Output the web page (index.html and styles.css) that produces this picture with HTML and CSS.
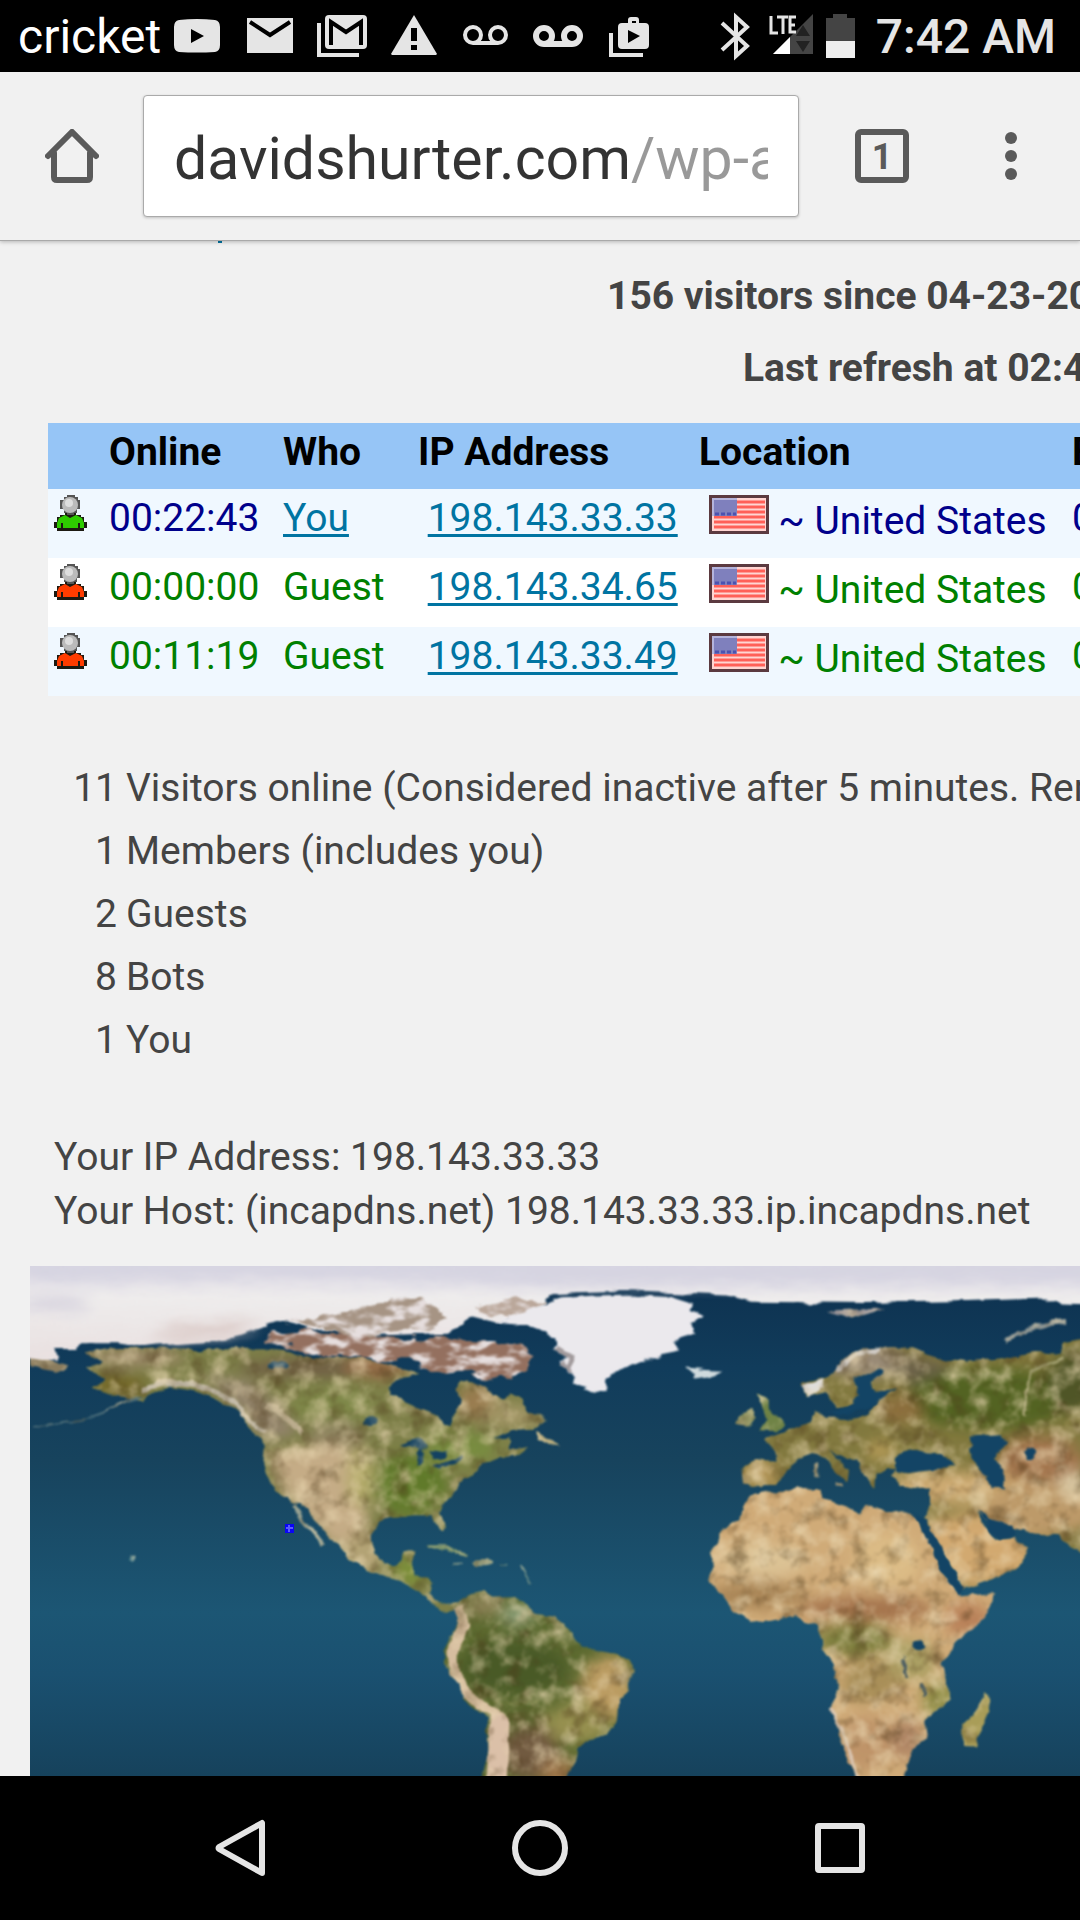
FILE: index.html
```
<!DOCTYPE html>
<html lang="en">
<head>
  <meta charset="UTF-8">
  <meta name="viewport" content="width=device-width, initial-scale=1.0">
  <title>Who's Been Online</title>
  <link rel="stylesheet" href="styles.css">
</head>
<body>
  <!-- Shared icons -->
  <svg class="sprite" aria-hidden="true">
    <symbol id="person" viewBox="0 0 33 36">
      <path d="M3 22h3v-2h5v-2h11v2h5v2h3v5h3v6h-3v3H3v-3H0v-6h3z" fill="#1c1a12"/>
      <path d="M5 23l6-3 5 3 6-3 6 3 2 5v5h-4v-5h-2v5H9v-5H7v5H3v-5z" fill="currentColor"/>
      <path d="M10 2h3V0h8v2h3v3h2v9h-3v4h-3v2h-7v-2h-3v-4H6V5h4z" fill="#555"/>
      <circle cx="16" cy="10" r="8" fill="#bbb"/>
      <circle cx="15" cy="8" r="4" fill="#dedede"/>
    </symbol>
    <symbol id="flag" viewBox="0 0 60 39">
      <path fill="#5b3a40" d="M0 0h60v39H0z"/>
      <path fill="#ffd5d2" d="M3 3h54v33H3z"/>
      <path d="M5 7h51M5 12h51M5 17h51M5 22h51M5 27h51M5 32h51" stroke="#ff6058" stroke-width="3"/>
      <path fill="#7f80bd" d="M3 3h25v18H3z"/>
      <path d="M6 19h21" stroke="#4c52b0" stroke-width="3" stroke-dasharray="4 2"/>
      <path d="M3 4h25M4 3v18" stroke="#b4b4dc" stroke-width="2"/>
    </symbol>
  </svg>

  <header class="status-bar">
    <span class="carrier">cricket</span>
    <svg viewBox="0 0 72 72"><path fill="#e5e5e5" d="M18 20q18-2 36 0 5 1 5 7v18q0 6-5 7-18 1-36 0-5-1-5-7V27q0-6 5-7zm12 9v14l13-7z"/></svg>
    <svg viewBox="0 0 72 72"><path fill="#e5e5e5" d="M14 18h46v35H14z"/><path d="M17 22l20 13 20-13" fill="none" stroke="#000" stroke-width="4"/></svg>
    <svg viewBox="0 0 72 72"><rect x="20" y="15" width="42" height="34" rx="4" fill="#e5e5e5"/><path d="M26 45V22l15 10 15-10v23" fill="none" stroke="#000" stroke-width="4"/><path d="M14 23v32h40" fill="none" stroke="#e5e5e5" stroke-width="4"/></svg>
    <svg viewBox="0 0 72 72"><path fill="#e5e5e5" d="M37 15l23 39-1 1H15l-1-1z"/><path d="M37 28v13M37 45v5" stroke="#000" stroke-width="6"/></svg>
    <svg viewBox="0 0 72 72"><path fill="none" stroke="#e5e5e5" stroke-width="4" d="M24 43h25M24 27a8 8 0 1 0 0 16a8 8 0 1 0 0-16M49 27a8 8 0 1 0 0 16a8 8 0 1 0 0-16"/></svg>
    <svg viewBox="0 0 72 72"><path fill="none" stroke="#e5e5e5" stroke-width="6" d="M23 44h28M23 28a8 8 0 1 0 0 16a8 8 0 1 0 0-16M51 28a8 8 0 1 0 0 16a8 8 0 1 0 0-16"/></svg>
    <svg viewBox="0 0 72 72"><path fill="#e5e5e5" fill-rule="evenodd" d="M29 23h6v-3q0-3 3-3h5q3 0 3 3v3h6q4 0 4 4v18q0 4-4 4H29q-4 0-4-4V27q0-4 4-4zm10 0h4v-2h-4zm-4 7v13l12-7z"/><path d="M18 33v22h32" fill="none" stroke="#e5e5e5" stroke-width="4"/></svg>

    <div class="status-right">
      <svg class="narrow" viewBox="0 0 48 72"><path d="M10 23l25 23-11 10V17l11 10L10 50" fill="none" stroke="#e5e5e5" stroke-width="4"/></svg>
      <svg class="signal" viewBox="0 0 60 72">
        <path d="M53 14v40H13z" fill="#444"/><path d="M30 37v17H13z" fill="#fff"/>
        <path d="M43 25l7 11H36zM43 52l7-11H36z" fill="#222"/>
        <path d="M11 16v17h7M17 17h11M23 17v17M36 17h-6v15h6M30 25h5" fill="none" stroke="#e5e5e5" stroke-width="3"/>
      </svg>
      <svg class="narrow" viewBox="0 0 48 72"><path d="M6 18h7v-4h14v4h8v23H6z" fill="#444"/><path d="M6 41h29v17H6z" fill="#eee"/></svg>
      <span class="clock">7:42 AM</span>
    </div>
  </header>

  <div class="toolbar">
    <button class="home" type="button" aria-label="Home">
      <svg viewBox="0 0 54 54"><path d="M3 27L27 3l24 24M9 24v24q0 3 3 3h30q3 0 3-3V24" fill="none" stroke="#5a5a5a" stroke-width="6" stroke-linecap="round"/></svg>
    </button>
    <div class="omnibox">
      <input type="text" value="davidshurter.com/wp-admin" aria-label="Address" spellcheck="false">
    </div>
    <button class="tabs" type="button" aria-label="Tabs"><span class="tab-count">1</span></button>
    <button class="more" type="button" aria-label="Menu">
      <svg viewBox="0 0 12 54"><circle cx="6" cy="9" r="6"/><circle cx="6" cy="27" r="6"/><circle cx="6" cy="45" r="6"/></svg>
    </button>
  </div>

  <main class="page">
    <div class="above-fold"></div>
    <p class="summary visitors">156 visitors since 04-23-2016</p>
    <p class="summary refresh">Last refresh at 02:42</p>

    <table class="online">
      <colgroup>
        <col class="col-icon"><col class="col-online"><col class="col-who"><col class="col-ip"><col class="col-location"><col>
      </colgroup>
      <thead>
        <tr><th></th><th>Online</th><th>Who</th><th>IP Address</th><th>Location</th><th>Entry</th></tr>
      </thead>
      <tbody>
        <tr class="me">
          <td><svg class="person active"><use href="#person"/></svg></td>
          <td>00:22:43</td>
          <td><a href="#you">You</a></td>
          <td>&nbsp;<a href="#ip1">198.143.33.33</a></td>
          <td>&nbsp;<svg class="flag"><use href="#flag"/></svg>&nbsp;~ United States</td>
          <td>02:19</td>
        </tr>
        <tr>
          <td><svg class="person"><use href="#person"/></svg></td>
          <td>00:00:00</td>
          <td>Guest</td>
          <td>&nbsp;<a href="#ip2">198.143.34.65</a></td>
          <td>&nbsp;<svg class="flag"><use href="#flag"/></svg>&nbsp;~ United States</td>
          <td>02:36</td>
        </tr>
        <tr>
          <td><svg class="person"><use href="#person"/></svg></td>
          <td>00:11:19</td>
          <td>Guest</td>
          <td>&nbsp;<a href="#ip3">198.143.33.49</a></td>
          <td>&nbsp;<svg class="flag"><use href="#flag"/></svg>&nbsp;~ United States</td>
          <td>02:24</td>
        </tr>
      </tbody>
    </table>

    <ul class="counts">
      <li><span class="num">11</span>Visitors online (Considered inactive after 5 minutes. Removed</li>
      <li><span class="num">1</span>Members (includes you)</li>
      <li><span class="num">2</span>Guests</li>
      <li><span class="num">8</span>Bots</li>
      <li><span class="num">1</span>You</li>
    </ul>

    <p class="host">
      Your IP Address: 198.143.33.33<br>
      Your Host: (incapdns.net) 198.143.33.33.ip.incapdns.net
    </p>

    <div class="map">
      <svg viewBox="0 0 1050 510" preserveAspectRatio="xMinYMin slice" role="img" aria-label="Visitor map">
        <defs>
          <linearGradient id="ocean" x1="0" y1="0" x2="0" y2="1">
            <stop offset="0" stop-color="#0d304e"/>
            <stop offset=".2" stop-color="#113c5b"/>
            <stop offset=".38" stop-color="#17435d"/>
            <stop offset=".68" stop-color="#1c5674"/>
            <stop offset=".8" stop-color="#1a5070"/>
            <stop offset="1" stop-color="#16425c"/>
          </linearGradient>
          <linearGradient id="ice" x1="0" y1="0" x2="0" y2="1">
            <stop offset="0" stop-color="#d5d3e2"/>
            <stop offset=".2" stop-color="#dcd9e5"/>
            <stop offset=".5" stop-color="#eeecec"/>
            <stop offset="1" stop-color="#e9e0e0"/>
          </linearGradient>
          <filter id="terrain" x="-30" y="-30" width="1110" height="570" filterUnits="userSpaceOnUse" color-interpolation-filters="sRGB">
            <feTurbulence type="fractalNoise" baseFrequency=".05" numOctaves="4" seed="4" result="noise"/>
            <feDisplacementMap in="SourceGraphic" in2="noise" scale="9" xChannelSelector="R" yChannelSelector="G" result="shape"/>
            <feColorMatrix in="noise" values="0 0 0 0 .3  0 0 0 0 .22  0 0 0 0 .1  1.4 0 0 0 -.7" result="dark"/>
            <feColorMatrix in="noise" values="0 0 0 0 .92  0 0 0 0 .85  0 0 0 0 .7  0 1.6 0 0 -.72" result="light"/>
            <feComposite in="dark" in2="shape" operator="in" result="darkLand"/>
            <feComposite in="light" in2="shape" operator="in" result="lightLand"/>
            <feMerge result="all"><feMergeNode in="shape"/><feMergeNode in="darkLand"/><feMergeNode in="lightLand"/></feMerge>
            <feGaussianBlur in="all" stdDeviation="1.2"/>
          </filter>
          <filter id="arctic" x="-30" y="-30" width="1110" height="570" filterUnits="userSpaceOnUse" color-interpolation-filters="sRGB">
            <feTurbulence type="fractalNoise" baseFrequency=".03 .1" numOctaves="3" seed="9" result="noise"/>
            <feDisplacementMap in="SourceGraphic" in2="noise" scale="10" xChannelSelector="R" yChannelSelector="G" result="shape"/>
            <feGaussianBlur in="shape" stdDeviation="1.2"/>
          </filter>
          <filter id="islands" x="-30" y="-30" width="1110" height="570" filterUnits="userSpaceOnUse" color-interpolation-filters="sRGB">
            <feTurbulence type="fractalNoise" baseFrequency=".05 .1" numOctaves="3" seed="2" result="noise"/>
            <feDisplacementMap in="SourceGraphic" in2="noise" scale="16" xChannelSelector="R" yChannelSelector="G" result="shape"/>
            <feColorMatrix in="noise" values="0 0 0 0 .9  0 0 0 0 .87  0 0 0 0 .87  4 0 0 0 -1.75" result="snow"/>
            <feComposite in="snow" in2="shape" operator="in" result="snowLand"/>
            <feMerge result="all"><feMergeNode in="shape"/><feMergeNode in="snowLand"/></feMerge>
            <feGaussianBlur in="all" stdDeviation="1.2"/>
          </filter>
          <filter id="soft" x="-30%" y="-30%" width="160%" height="160%"><feGaussianBlur stdDeviation="20"/></filter>
          <path id="namerica" d="M262 300L330 285 480 283 600 288 700 288 780 285 850 290 900 305 960 315 1080 312 1160 330 1220 350 1262 362 1210 370 1165 400 1165 425 1210 440 1260 460 1312 480 1328 512 1355 510 1358 480 1382 450 1370 400 1378 380 1420 385 1460 400 1475 425 1510 432 1530 410 1560 430 1582 465 1625 480 1640 500 1600 522 1530 525 1480 548 1525 545 1530 582 1585 572 1545 602 1500 598 1460 615 1430 640 1395 662 1370 700 1330 738 1320 765 1335 805 1322 825 1308 800 1298 770 1240 770 1180 775 1140 790 1118 830 1122 880 1150 912 1188 915 1212 878 1250 878 1238 920 1240 945 1285 945 1295 965 1288 1000 1310 1020 1350 1030 1375 1030 1375 1046 1325 1044 1290 1025 1260 990 1200 967 1150 947 1100 932 1045 902 1020 870 990 840 950 790 920 745 880 735 840 710 800 660 790 620 795 570 780 545 740 510 700 460 650 430 590 408 510 395 450 415 425 440 380 430 340 420 275 400 320 372 255 345 310 325z"/>
          <path id="samerica" d="M345 1035L390 1000 430 990 460 1010 520 1008 560 1030 590 1060 650 1068 680 1100 700 1135 760 1160 830 1170 870 1192 888 1225 860 1272 835 1310 830 1370 800 1410 740 1425 710 1450 705 1490 670 1540 425 1540 445 1450 440 1360 385 1320 350 1260 308 1195 310 1160 350 1100 360 1070z"/>
          <path id="africa" d="M215 712L300 700 380 693 425 690 430 720 490 740 540 768 560 740 610 755 660 765 705 765 720 800 760 860 790 930 840 1003 942 993 935 1030 880 1100 830 1140 788 1200 800 1250 805 1310 735 1370 745 1420 700 1450 665 1540 530 1540 490 1450 480 1390 448 1335 480 1280 470 1220 425 1160 420 1088 370 1080 350 1058 210 1080 160 1050 130 1005 90 965 100 920 90 880 130 810 180 780 190 740z"/>
          <path id="eurasia" d="M190 625L245 610 290 615 285 580 250 548 330 520 390 500 405 470 430 490 500 490 560 480 600 440 500 455 470 460 440 415 380 430 368 385 435 368 500 310 560 285 680 280 740 300 810 320 850 325 960 315 1080 293 1140 300 1150 265 1240 250 1240 900 1170 862 1140 825 1060 820 1010 812 960 800 925 780 900 760 905 795 940 845 1000 830 1048 865 1010 920 940 955 850 985 800 900 770 850 725 785 750 740 750 692 700 693 660 685 635 655 650 635 620 630 590 650 585 690 555 660 540 620 490 600 450 578 510 640 505 668 478 650 430 602 400 595 350 610 325 640 290 672 245 692 195 680z"/>
          <clipPath id="clipN"><use href="#namerica"/></clipPath>
          <clipPath id="clipS"><use href="#samerica"/></clipPath>
          <clipPath id="clipAf"><use href="#africa"/></clipPath>
          <clipPath id="clipEu"><use href="#eurasia"/></clipPath>
        </defs>

        <rect width="1050" height="510" fill="url(#ocean)"/>

        <!-- North America -->
        <g filter="url(#terrain)">
          <g transform="translate(-30 -16) scale(.3333 .3444)">
            <use href="#namerica" fill="#7d7f48"/>
            <g clip-path="url(#clipN)">
              <g filter="url(#soft)">
                <ellipse cx="400" cy="310" rx="150" ry="22" fill="#a18a6e"/>
                <ellipse cx="350" cy="390" rx="90" ry="35" fill="#75692c"/>
                <ellipse cx="950" cy="340" rx="240" ry="30" fill="#716044"/>
                <ellipse cx="1130" cy="340" rx="100" ry="26" fill="#9a6a48"/>
                <path d="M600 360L760 380 900 520 800 560 700 450z" fill="#92836a"/>
                <ellipse cx="1000" cy="450" rx="130" ry="55" fill="#7f8848"/>
                <ellipse cx="1010" cy="540" rx="90" ry="45" fill="#8f8460"/>
                <path d="M800 590L1000 560 1110 620 1100 780 1120 900 1020 880 860 720z" fill="#c5ac86"/>
                <ellipse cx="1080" cy="660" rx="40" ry="90" fill="#b5ac6c"/>
                <ellipse cx="1230" cy="680" rx="110" ry="90" fill="#617a2c"/>
                <ellipse cx="1430" cy="440" rx="60" ry="50" fill="#9a7c50"/>
                <ellipse cx="1530" cy="480" rx="90" ry="35" fill="#a39666"/>
                <ellipse cx="1380" cy="570" rx="110" ry="45" fill="#788c40"/>
                <ellipse cx="1090" cy="880" rx="60" ry="70" fill="#b3a374"/>
                <ellipse cx="1230" cy="930" rx="50" ry="40" fill="#7b9038"/>
              </g>
            </g>
            <path d="M90 300L150 322 205 335 190 355 140 345 90 335z" fill="#8a7c5e"/>
            <path d="M430 425L350 455 250 490 100 515" fill="none" stroke="#3f6474" stroke-width="6"/>
            <path d="M430 405Q520 370 620 400T720 480L800 530" fill="none" stroke="#c3bba9" stroke-width="14"/>
            <path d="M800 450L850 480 910 530" fill="none" stroke="#b9ab8c" stroke-width="16"/>
            <path d="M885 742L920 800 970 858" fill="none" stroke="#9aa392" stroke-width="12"/>
            <path d="M1610 530L1680 568 1610 558z" fill="#b3a879"/>
            <path d="M1285 862L1340 862 1380 885 1405 890" fill="none" stroke="#84986c" stroke-width="9"/>
            <ellipse cx="1450" cy="906" rx="30" ry="9" fill="#98a384"/>
            <path d="M1360 914h25M1500 914h22M1560 920l30 50" stroke="#547d7e" stroke-width="6"/>
            <ellipse cx="397" cy="898" rx="9" ry="8" fill="#5f8b90"/>
            <!-- lakes -->
            <g fill="#144261">
              <path d="M1200 562L1250 545 1285 570 1262 580 1260 625 1245 625 1250 575z"/>
              <path d="M1285 578L1340 585 1335 602 1300 605zM1300 625L1385 602 1385 612 1315 635z"/>
              <ellipse cx="1112" cy="497" rx="18" ry="14"/>
              <ellipse cx="835" cy="336" rx="32" ry="11"/>
            </g>
          </g>
        </g>

        <!-- Polar ice and Canadian archipelago -->
        <g filter="url(#arctic)">
          <g transform="translate(-30 -16) scale(.3333 .3444)">
            <path d="M0 -40H3400V165L3185 158 3165 140 2900 148 2600 154 2260 150 2180 132 1900 120 1660 128 1620 165 1500 215 1420 195 1350 240 1100 250 960 230 860 205 790 222 700 252 620 264 480 274 430 280 350 268 240 268 235 290 165 290 178 322 0 302z" fill="url(#ice)"/>
            <g filter="url(#soft)">
              <path d="M0 20H3400V95L1700 105 1200 90 800 80 400 85 90 90z" fill="#d6d4e1"/>
              <ellipse cx="160" cy="155" rx="110" ry="20" fill="#d6d2de"/>
              <path d="M450 245Q620 200 780 210L700 245 500 262z" fill="#d9c8c4"/>
            </g>
          </g>
        </g>
        <g filter="url(#islands)">
          <g transform="translate(-30 -16) scale(.3333 .3444)">
            <path d="M790 250L900 235 1060 240 1210 255 1320 252 1420 268 1500 268 1570 272 1598 310 1580 345 1525 378 1460 370 1370 345 1290 352 1230 320 1130 320 1030 312 950 305 870 280 790 265z" fill="#94705f"/>
            <path d="M860 215L1060 175 1180 145 1290 150 1340 200 1290 235 1180 230 1080 260 960 220z" fill="#a69484"/>
            <path d="M1420 165L1560 140 1640 150 1540 200 1470 195z" fill="#baa79a"/>
          </g>
        </g>

        <!-- Greenland, Iceland -->
        <g filter="url(#arctic)">
          <g transform="translate(310 -16) scale(.3333 .3444)">
            <path d="M470 212L600 160 640 145 760 135 900 132 1000 137 1060 155 1045 172 1088 190 1050 215 1070 240 1000 262 1020 295 940 310 880 332 820 352 800 375 795 408 760 405 710 387 680 350 655 320 690 308 640 285 650 265 610 238 560 218z" fill="#ebe9ed"/>
            <path d="M650 285L692 310 690 350 660 325" fill="none" stroke="#a19a9c" stroke-width="16"/>
            <path d="M1030 338L1080 342 1148 345 1130 362 1070 370z" fill="#cfdadd"/>
          </g>
        </g>

        <!-- South America -->
        <g filter="url(#terrain)">
          <g transform="translate(310 -16) scale(.3333 .3444)">
            <use href="#samerica" fill="#5c6a30"/>
            <g clip-path="url(#clipS)">
              <g filter="url(#soft)">
                <ellipse cx="430" cy="1030" rx="60" ry="30" fill="#8f8358"/>
                <ellipse cx="530" cy="1060" rx="50" ry="30" fill="#8fa27c"/>
                <ellipse cx="520" cy="1210" rx="160" ry="80" fill="#4a5a26"/>
                <ellipse cx="800" cy="1270" rx="80" ry="100" fill="#bb9c62"/>
                <ellipse cx="710" cy="1370" rx="100" ry="60" fill="#96904f"/>
                <ellipse cx="570" cy="1460" rx="90" ry="80" fill="#715a40"/>
                <ellipse cx="660" cy="1520" rx="60" ry="40" fill="#a3794e"/>
              </g>
              <path d="M360 1040L375 1090 330 1170 365 1270 430 1330 490 1360 480 1450 460 1540" fill="none" stroke="#d6bd9f" stroke-width="30"/>
              <path d="M480 1350L470 1540" stroke="#dbc0a8" stroke-width="60"/>
            </g>
          </g>
        </g>

        <!-- Africa, Europe, Asia -->
        <g filter="url(#terrain)">
          <g transform="translate(650 -16) scale(.3333 .3444)">
            <use href="#africa" fill="#d0ab78"/>
            <g clip-path="url(#clipAf)">
              <g filter="url(#soft)">
                <ellipse cx="250" cy="900" rx="130" ry="50" fill="#dcc294"/>
                <ellipse cx="620" cy="900" rx="100" ry="80" fill="#dcbc86"/>
                <ellipse cx="230" cy="1000" rx="150" ry="40" fill="#a98556"/>
                <ellipse cx="560" cy="1040" rx="200" ry="40" fill="#a5744e"/>
                <ellipse cx="520" cy="1130" rx="120" ry="50" fill="#7d7f3e"/>
                <ellipse cx="690" cy="1190" rx="80" ry="60" fill="#aba064"/>
                <ellipse cx="860" cy="1070" rx="70" ry="50" fill="#b9825a"/>
                <ellipse cx="570" cy="1250" rx="90" ry="60" fill="#a98f58"/>
                <ellipse cx="780" cy="1310" rx="60" ry="60" fill="#939048"/>
                <ellipse cx="560" cy="1430" rx="90" ry="80" fill="#bf9469"/>
                <ellipse cx="680" cy="1420" rx="50" ry="60" fill="#b18766"/>
              </g>
            </g>
            <use href="#eurasia" fill="#82793f"/>
            <g clip-path="url(#clipEu)">
              <g filter="url(#soft)">
                <ellipse cx="560" cy="320" rx="130" ry="50" fill="#998a76"/>
                <ellipse cx="720" cy="350" rx="90" ry="40" fill="#6b6146"/>
                <ellipse cx="930" cy="430" rx="250" ry="90" fill="#526424"/>
                <ellipse cx="1180" cy="380" rx="80" ry="90" fill="#4f5527"/>
                <ellipse cx="660" cy="460" rx="70" ry="40" fill="#8c6e3c"/>
                <ellipse cx="240" cy="650" rx="60" ry="40" fill="#b39558"/>
                <ellipse cx="600" cy="580" rx="40" ry="30" fill="#b59b59"/>
                <ellipse cx="1080" cy="620" rx="130" ry="80" fill="#a3754e"/>
                <ellipse cx="840" cy="690" rx="210" ry="50" fill="#cdaa72"/>
                <ellipse cx="880" cy="870" rx="190" ry="110" fill="#d2a970"/>
                <ellipse cx="1080" cy="750" rx="170" ry="80" fill="#bd9a69"/>
                <ellipse cx="1190" cy="680" rx="60" ry="40" fill="#d8c6a0"/>
              </g>
            </g>
            <path d="M235 430L262 440 262 460 305 505 290 522 245 520 265 490z" fill="#6f8346" stroke="#6f8346" stroke-width="8"/>
            <path d="M175 505L185 480 215 465 225 485 205 510z" fill="#8c935f" stroke="#8c935f" stroke-width="6"/>
            <path d="M915 1285L932 1310 888 1442 850 1440 850 1370 895 1330z" fill="#a99d58"/>
            <path d="M410 620v40M470 682h22" stroke="#96937a" stroke-width="9"/>
            <path d="M368 392L430 372 435 400 385 432z" fill="#dfdedd"/>
            <path d="M470 345L530 305 600 288" fill="none" stroke="#cfcac4" stroke-width="14"/>
            <path d="M970 268Q1020 222 1155 210" fill="none" stroke="#8c9492" stroke-width="14"/>
            <path d="M440 176L620 170 520 202z" fill="#9c979c"/>
            <path d="M1150 312L1050 350 1030 480" fill="none" stroke="#9c9a6a" stroke-width="9"/>
            <path d="M450 1330L490 1400 530 1530" fill="none" stroke="#d9c4b0" stroke-width="9"/>
          </g>
        </g>
        <!-- Inland seas -->
        <g filter="url(#arctic)">
          <g transform="translate(650 -16) scale(.3333 .3444)" fill="#134465">
            <path d="M645 605L690 570 740 588 785 590 825 630 760 632 690 642 645 648z"/>
            <path d="M870 545L960 538 990 560 945 600 978 650 972 692 930 690 905 640 875 590z"/>
            <path d="M520 380L600 335 612 348 572 380 590 415 650 405 600 435 560 468 480 480 440 465 505 455 540 420z"/>
            <path d="M895 750L925 775 1005 808 1005 830 965 845 930 820z"/>
            <path d="M700 765L735 785 800 890 850 985 835 1000 785 935 755 860z"/>
            <ellipse cx="1050" cy="590" rx="17" ry="16"/>
            <ellipse cx="715" cy="1148" rx="18" ry="20"/>
            <path d="M665 1185L685 1240M730 1255L735 1300" stroke="#4d5e62" stroke-width="9"/>
          </g>
        </g>

        <!-- Visitor pin -->
        <path fill="#0a05f5" d="M255 258h9v9h-9z"/>
        <path d="M259 259v7M256 262h7" stroke="#5a5aff" stroke-width="2"/>
      </svg>
    </div>
  </main>

  <nav class="nav-bar">
    <button type="button" aria-label="Back"><svg viewBox="0 0 60 60"><path d="M52 5v50L9 31q-1-1 0-2z" fill="none" stroke="#e5e5e5" stroke-width="6" stroke-linejoin="round"/></svg></button>
    <button type="button" aria-label="Home screen"><svg viewBox="0 0 60 60"><circle cx="30" cy="30" r="25" fill="none" stroke="#e5e5e5" stroke-width="6"/></svg></button>
    <button type="button" aria-label="Recent apps"><svg viewBox="0 0 60 60"><rect x="8" y="8" width="44" height="44" rx="1" fill="none" stroke="#e5e5e5" stroke-width="6"/></svg></button>
  </nav>
</body>
</html>
```
FILE: styles.css
```
* {
  box-sizing: border-box;
}

body {
  font-family: Roboto, sans-serif;
  font-size: 39px;
  line-height: 47px;
  color: #444;
  background: #f1f1f1;
  margin: 0;
  height: 100vh;
  display: flex;
  flex-direction: column;
  overflow: hidden;
}

button {
  background: none;
  border: 0;
  padding: 0;
  font: inherit;
}

svg {
  display: block;
}

.sprite {
  position: absolute;
  width: 0;
  height: 0;
}

/* Status bar */
.status-bar {
  display: flex;
  align-items: center;
  height: 72px;
  flex: none;
  padding: 0 24px 0 18px;
  background: #000;
  color: #fff;
  font-size: 48px;
}

.status-bar svg {
  width: 72px;
  height: 72px;
  flex: none;
}

.status-bar .narrow {
  width: 48px;
}

.status-bar .signal {
  width: 60px;
}

.status-right {
  display: flex;
  align-items: center;
  margin-left: auto;
}

.clock {
  margin-left: 8px;
  color: #e5e5e5;
  font-weight: 500;
}

/* Browser toolbar */
.toolbar {
  display: flex;
  align-items: center;
  height: 169px;
  flex: none;
  padding: 0 63px 0 45px;
  background: #f1f1f1;
  border-bottom: 1px solid #a9a9a9;
  box-shadow: 0 1px 4px rgba(0, 0, 0, 0.25);
  z-index: 1;
}

.home svg {
  width: 54px;
  height: 54px;
}

.omnibox {
  flex: 1;
  min-width: 0;
  margin: 0 56px 0 44px;
  padding: 4px 30px 0;
  height: 122px;
  background: #fff;
  border: 1px solid #aaa;
  border-radius: 4px;
  box-shadow: 0 1px 3px rgba(0, 0, 0, 0.2);
}

/* host is dark, the rest of the url is grey */
.omnibox input {
  width: 100%;
  height: 100%;
  padding: 0;
  border: 0;
  outline: 0;
  font: 59px Roboto, sans-serif;
  color: transparent;
  background: linear-gradient(to right, #333 457px, #999 457px);
  -webkit-background-clip: text;
  background-clip: text;
}

.tabs {
  width: 54px;
  height: 54px;
  border: 6px solid #5a5a5a;
  border-radius: 6px;
  color: #5a5a5a;
  font-size: 36px;
  font-weight: bold;
  line-height: 44px;
}

.tab-count {
  display: block;
}

.more {
  margin-left: 96px;
}

.more svg {
  width: 12px;
  height: 54px;
  fill: #5a5a5a;
}

/* Page */
.page {
  flex: 1;
  min-height: 0;
  display: flex;
  flex-direction: column;
  overflow: hidden;
  white-space: nowrap;
}

.above-fold {
  width: 4px;
  height: 2px;
  margin-left: 218px;
  flex: none;
  background: #0074a2;
}

.summary {
  margin: 0 0 25px;
  font-weight: bold;
}

.visitors {
  margin-top: 30px;
  padding-left: 607px;
}

.refresh {
  padding-left: 743px;
  margin-bottom: 31px;
}

.online {
  table-layout: fixed;
  width: calc(100% + 160px);
  margin-left: 48px;
  border-collapse: collapse;
  color: #008000;
}

.online th,
.online td {
  padding: 6px 0 13px 7px;
  text-align: left;
  vertical-align: top;
}

.online td {
  height: 69px;
}

.online td:first-child {
  padding-left: 6px;
}

.online thead {
  background: #96c5f6;
  color: #000;
}

.online tbody tr {
  background: #fff;
}

.online tbody tr:nth-child(odd) {
  background: #f0f8ff;
}

.online .me {
  color: #00008b;
}

.online a {
  color: #0074a2;
  text-decoration-thickness: 3px;
  text-underline-offset: 3px;
}

.col-icon { width: 54px; }
.col-online { width: 174px; }
.col-who { width: 135px; }
.col-ip { width: 281px; }
.col-location { width: 373px; }

.person {
  width: 33px;
  height: 36px;
  color: #ff3c00;
}

.person.active {
  color: #2ecc00;
}

.flag {
  display: inline-block;
  width: 60px;
  height: 39px;
}

.counts {
  list-style: none;
  margin: 69px 0 50px;
  padding: 0 0 0 54px;
}

.counts li {
  display: flex;
  gap: 9px;
  height: 63px;
}

.num {
  flex: none;
  width: 63px;
  text-align: right;
}

.host {
  margin: 0 0 28px;
  padding-left: 54px;
  line-height: 54px;
}

.map {
  flex: 1;
  min-height: 0;
  margin-left: 30px;
}

.map svg {
  width: 100%;
  height: 100%;
}

/* Android navigation */
.nav-bar {
  display: flex;
  justify-content: center;
  height: 144px;
  flex: none;
  background: #000;
}

.nav-bar button {
  width: 300px;
}

.nav-bar svg {
  width: 60px;
  height: 60px;
  margin: 0 auto;
}
```
